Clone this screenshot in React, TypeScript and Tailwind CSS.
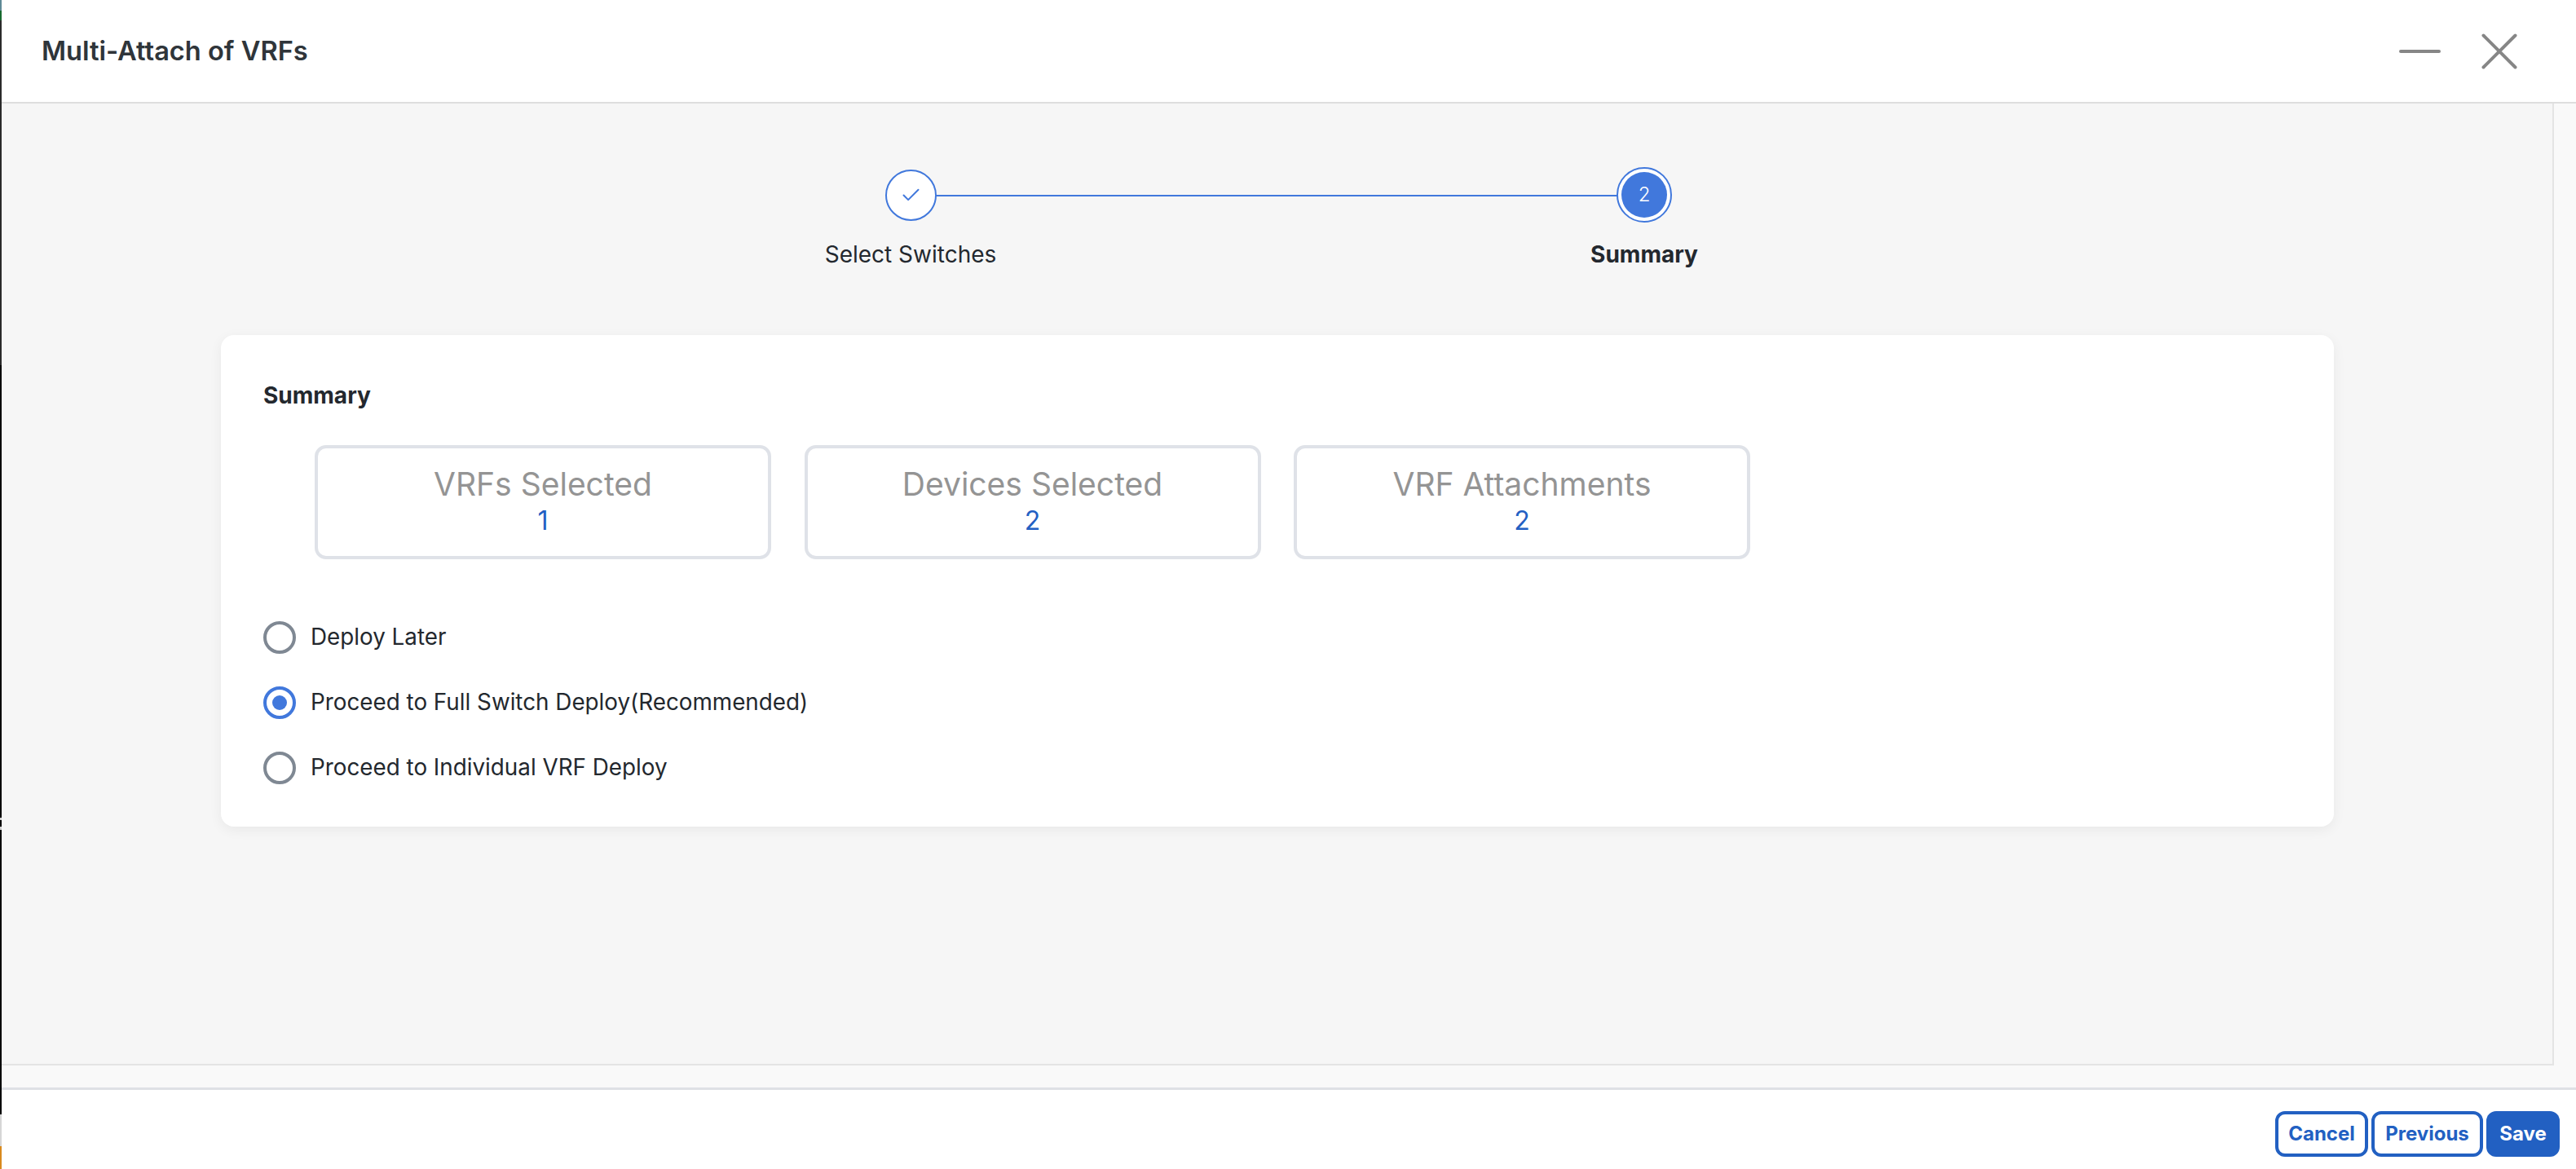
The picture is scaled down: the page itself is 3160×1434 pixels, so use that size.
import { Check } from 'lucide-react'

const stats = [
  { label: 'VRFs Selected', value: '1' },
  { label: 'Devices Selected', value: '2' },
  { label: 'VRF Attachments', value: '2' },
]

const options = [
  { label: 'Deploy Later', checked: false },
  { label: 'Proceed to Full Switch Deploy(Recommended)', checked: true },
  { label: 'Proceed to Individual VRF Deploy', checked: false },
]

function Stepper() {
  return (
    <div className="relative flex w-[1200px] justify-between">
      <div className="absolute left-[150px] top-[34px] h-[2px] w-[900px] bg-[#4178dc]" />
      <div className="relative flex w-[300px] flex-col items-center">
        <div className="flex h-[68px] items-center">
          <div className="flex h-[63px] w-[63px] items-center justify-center rounded-full border-2 border-[#4178dc] bg-white">
            <Check className="h-[27px] w-[27px] text-[#4178dc]" strokeWidth={1.8} />
          </div>
        </div>
        <div className="mt-[22px] text-[28px] leading-[34px] text-[#23282e]">Select Switches</div>
      </div>
      <div className="relative flex w-[300px] flex-col items-center">
        <div className="flex h-[68px] w-[68px] items-center justify-center rounded-full border-2 border-[#4178dc] bg-white">
          <div className="flex h-[56px] w-[56px] items-center justify-center rounded-full bg-[#4178dc] text-[24px] font-light text-white">
            2
          </div>
        </div>
        <div className="mt-[22px] text-[28px] font-bold leading-[34px] text-[#23282e]">Summary</div>
      </div>
    </div>
  )
}

export default function App() {
  return (
    <div className="flex h-[1434px] w-[3160px] overflow-hidden bg-white font-['Inter',sans-serif]">
      {/* sliver of the window behind the dialog */}
      <div className="flex w-[2px] shrink-0 flex-col">
        <div className="h-[13px] bg-[#5f8a96]" />
        <div className="h-[12px] bg-[#17692f]" />
        <div className="h-[423px] bg-[#2a2a2a]" />
        <div className="h-[555px] bg-black" />
        <div className="h-[3px] bg-[#cfcfcf]" />
        <div className="h-[8px] bg-black" />
        <div className="h-[4px] bg-[#cfcfcf]" />
        <div className="h-[349px] bg-black" />
        <div className="h-[39px] bg-[#d6d6d6]" />
        <div className="h-[28px] bg-[#d98a1e]" />
      </div>
      <div className="flex min-w-0 flex-1 flex-col">
        <header className="flex h-[127px] shrink-0 items-center justify-between border-b-2 border-[#dedede] bg-white pl-[49px] pr-[71px]">
          <h1 className="text-[32.6px] font-semibold text-[#2f353a]">Multi-Attach of VRFs</h1>
          <div className="flex items-center gap-[47px]">
            <svg viewBox="0 0 55 46" className="h-[46px] w-[55px]" fill="none" stroke="#868686" strokeWidth="4" strokeLinecap="round">
              <path d="M4 23H51" />
            </svg>
            <svg viewBox="0 0 46 46" className="h-[46px] w-[46px]" fill="none" stroke="#868686" strokeWidth="4" strokeLinecap="round">
              <path d="M3.5 3.5L42.5 42.5M42.5 3.5L3.5 42.5" />
            </svg>
          </div>
        </header>

        <div className="flex min-h-0 flex-1 flex-col bg-[#f9f9f9]">
          <main className="h-[1180px] w-[3131px] shrink-0 border-b-2 border-r-2 border-[#e4e4e4] bg-[#f6f6f6] pt-[78px]">
            <div className="pl-[965px]">
              <Stepper />
            </div>
            <section className="ml-[269px] mt-[82px] w-[2592px] rounded-[16px] bg-white pb-[52px] pl-[52px] pt-[57px] shadow-[0_4px_16px_rgba(0,0,0,0.06)]">
              <h2 className="text-[28px] font-bold leading-[34px] text-[#23282e]">Summary</h2>
              <div className="ml-[63px] mt-[44px] flex gap-[40.5px]">
                {stats.map((s) => (
                  <div
                    key={s.label}
                    className="flex h-[140px] w-[560px] flex-col items-center justify-center rounded-[14px] border-4 border-[#dfe2e8]"
                  >
                    <div className="text-[39px] leading-[46px] text-[#949494]">{s.label}</div>
                    <div className="text-[32px] leading-[44px] text-[#2360c3]">{s.value}</div>
                  </div>
                ))}
              </div>
              <div className="mt-[76px] flex flex-col gap-[40px]">
                {options.map((o) => (
                  <label key={o.label} className="flex h-[40px] items-center gap-[18px]">
                    {o.checked ? (
                      <span className="flex h-[40px] w-[40px] items-center justify-center rounded-full border-4 border-[#4178dc]">
                        <span className="h-[18px] w-[18px] rounded-full bg-[#4178dc]" />
                      </span>
                    ) : (
                      <span className="h-[40px] w-[40px] rounded-full border-4 border-[#7f8893]" />
                    )}
                    <span className="text-[27.8px] text-[#23282e]">{o.label}</span>
                  </label>
                ))}
              </div>
            </section>
          </main>
        </div>

        <footer className="flex h-[100px] shrink-0 items-start justify-end gap-[4px] border-t-[3px] border-[#dfe1e5] bg-white pr-[20px] pt-[26px]">
          <button className="h-[56px] w-[114px] rounded-[12px] border-4 border-[#2260c2] text-[24px] font-bold text-[#2260c2]">
            Cancel
          </button>
          <button className="h-[56px] w-[137px] rounded-[12px] border-4 border-[#2260c2] text-[24px] font-bold text-[#2260c2]">
            Previous
          </button>
          <button className="h-[56px] w-[90px] rounded-[12px] bg-[#2260c2] text-[24px] font-bold text-white">
            Save
          </button>
        </footer>
      </div>
    </div>
  )
}
